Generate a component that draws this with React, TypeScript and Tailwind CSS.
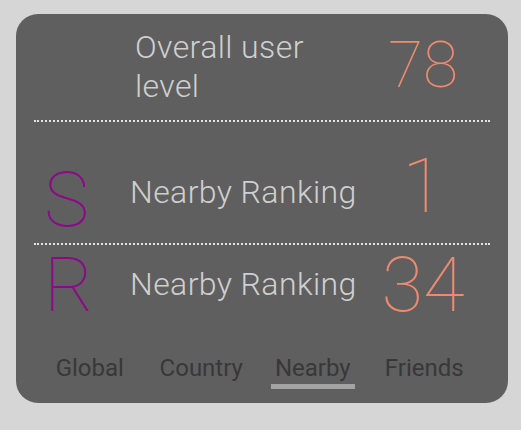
export default function App() {
  const tabs = ["Global", "Country", "Nearby", "Friends"];

  return (
    <div className="min-h-screen w-full bg-[#d6d6d6] pt-[14px] pl-[16px] font-['Roboto',sans-serif]">
      <div className="w-[492px] h-[389px] rounded-[22px] bg-[#5f5f5f] px-[18px] flex flex-col">
        {/* overall level */}
        <div className="h-[106px] flex items-start">
          <div className="flex-1 pl-[101px] mt-[14px] text-[32px] leading-[39px] tracking-[0.4px] font-light text-[#cfcfcf]">
            Overall user
            <br />
            level
          </div>
          <div className="w-[86px] mr-[24px] mt-[20px] text-center text-[64px] leading-none font-thin text-[#ee8a6f]">
            78
          </div>
        </div>
        <div className="border-t-2 border-dotted border-[#e4e4e4]"></div>

        {/* S ranking */}
        <div className="h-[121px] flex items-start">
          <div className="w-[96px] pl-[10px] mt-[40px] text-[76px] leading-none font-thin text-[#8c0a8a]">
            S
          </div>
          <div className="flex-1 mt-[54px] text-[32px] leading-none tracking-[0.4px] font-light text-[#cfcfcf]">
            Nearby Ranking
          </div>
          <div className="w-[86px] mr-[24px] mt-[26px] text-center text-[76px] leading-none font-thin text-[#ee8a6f]">
            1
          </div>
        </div>
        <div className="border-t-2 border-dotted border-[#e4e4e4]"></div>

        {/* R ranking */}
        <div className="h-[111px] flex items-start">
          <div className="w-[96px] pl-[10px] mt-[2px] text-[76px] leading-none font-thin text-[#8c0a8a]">
            R
          </div>
          <div className="flex-1 mt-[23px] text-[32px] leading-none tracking-[0.4px] font-light text-[#cfcfcf]">
            Nearby Ranking
          </div>
          <div className="w-[86px] mr-[24px] mt-[2px] text-center text-[76px] leading-none font-thin text-[#ee8a6f]">
            34
          </div>
        </div>

        {/* tabs */}
        <div className="grid grid-cols-4 w-[446px]">
          {tabs.map((tab) => (
            <div key={tab} className="flex flex-col items-center">
              <span className="text-[24px] leading-none text-[#383838]">{tab}</span>
              {tab === "Nearby" ? (
                <div className="mt-[4px] w-[84px] h-[5px] bg-[#a4a4a4]"></div>
              ) : null}
            </div>
          ))}
        </div>
      </div>
    </div>
  );
}
